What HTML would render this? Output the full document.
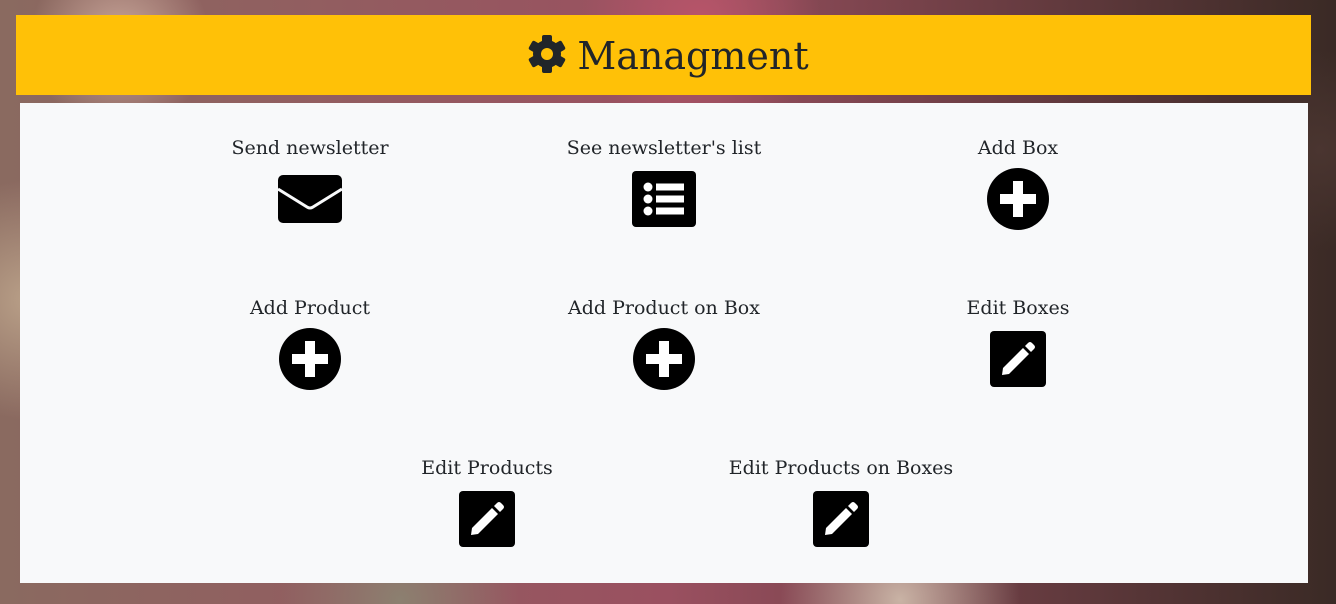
<!DOCTYPE html>
<html><head><meta charset="utf-8"><style>
*{margin:0;padding:0;box-sizing:border-box}
body{width:1336px;height:604px;overflow:hidden;position:relative;font-family:"DejaVu Serif","Liberation Serif",serif;color:#212529;
background:
radial-gradient(circle at 120px 40px,#c9a79a 0,transparent 90px),
radial-gradient(circle at 700px 20px,#b8556a 0,transparent 120px),
radial-gradient(circle at 30px 300px,#b9a088 0,transparent 120px),
radial-gradient(circle at 1320px 150px,#4a3530 0,transparent 100px),
radial-gradient(circle at 400px 600px,#8c8070 0,transparent 120px),
radial-gradient(circle at 900px 600px,#c9b3a5 0,transparent 120px),
linear-gradient(90deg,#8a6a60,#9a5060 50%,#3a2a25);}
.bar{position:absolute;left:16px;top:15px;width:1295px;height:80px;background:#ffc107}
.title{position:absolute;left:0;right:0;top:33px;text-align:center;font-size:38px;line-height:46px;}
.title svg{vertical-align:-5px;margin-right:10px}
.panel{position:absolute;left:20px;top:103px;width:1288px;height:480px;background:#f8f9fa}
.lbl{position:absolute;width:300px;text-align:center;font-size:19px;line-height:20px;white-space:nowrap}
.ic{position:absolute}
</style></head><body>
<div class="bar"></div>
<div class="title"><svg width="40" height="40" viewBox="0 0 40 40"><g fill="#212529" transform="translate(20 20)">
<circle r="14"/>
<g id="t"><rect x="-5" y="-19" width="10" height="10" rx="2"/></g>
<use href="#t" transform="rotate(60)"/><use href="#t" transform="rotate(120)"/><use href="#t" transform="rotate(180)"/><use href="#t" transform="rotate(240)"/><use href="#t" transform="rotate(300)"/>
<circle r="6" fill="#ffc107"/></g></svg>Managment</div>
<div class="panel"></div>

<div class="lbl" style="left:160px;top:138px">Send newsletter</div>
<div class="lbl" style="left:514px;top:138px">See newsletter's list</div>
<div class="lbl" style="left:868px;top:138px">Add Box</div>
<div class="lbl" style="left:160px;top:298px">Add Product</div>
<div class="lbl" style="left:514px;top:298px">Add Product on Box</div>
<div class="lbl" style="left:868px;top:298px">Edit Boxes</div>
<div class="lbl" style="left:337px;top:458px">Edit Products</div>
<div class="lbl" style="left:691px;top:458px">Edit Products on Boxes</div>

<svg class="ic" style="left:278px;top:175px" width="64" height="48" viewBox="0 0 64 48"><rect width="64" height="48" rx="5"/><path d="M0 14 L29 32 Q32 34 35 32 L64 14" fill="none" stroke="#f8f9fa" stroke-width="3"/></svg>

<svg class="ic" style="left:632px;top:171px" width="64" height="56" viewBox="0 0 64 56"><rect width="64" height="56" rx="4"/><g fill="#fff"><circle cx="16" cy="16" r="4.5"/><circle cx="16" cy="28" r="4.5"/><circle cx="16" cy="40" r="4.5"/><rect x="24" y="12.5" width="28" height="7"/><rect x="24" y="24.5" width="28" height="7"/><rect x="24" y="36.5" width="28" height="7"/></g></svg>

<svg class="ic" style="left:987px;top:168px" width="62" height="62" viewBox="0 0 62 62"><circle cx="31" cy="31" r="31"/><rect x="26" y="13" width="10" height="36" fill="#fff"/><rect x="13" y="26" width="36" height="10" fill="#fff"/></svg>
<svg class="ic" style="left:279px;top:328px" width="62" height="62" viewBox="0 0 62 62"><circle cx="31" cy="31" r="31"/><rect x="26" y="13" width="10" height="36" fill="#fff"/><rect x="13" y="26" width="36" height="10" fill="#fff"/></svg>
<svg class="ic" style="left:633px;top:328px" width="62" height="62" viewBox="0 0 62 62"><circle cx="31" cy="31" r="31"/><rect x="26" y="13" width="10" height="36" fill="#fff"/><rect x="13" y="26" width="36" height="10" fill="#fff"/></svg>

<svg class="ic" style="left:990px;top:331px" width="56" height="56" viewBox="0 0 56 56"><rect width="56" height="56" rx="4"/><g fill="#fff"><path d="M13 37 L33 17 L39 23 L19 43 L12 44 Z"/><path d="M35 15 L38 12 Q40 10 42 12 L44 14 Q46 16 44 18 L41 21 Z"/></g></svg>
<svg class="ic" style="left:459px;top:491px" width="56" height="56" viewBox="0 0 56 56"><rect width="56" height="56" rx="4"/><g fill="#fff"><path d="M13 37 L33 17 L39 23 L19 43 L12 44 Z"/><path d="M35 15 L38 12 Q40 10 42 12 L44 14 Q46 16 44 18 L41 21 Z"/></g></svg>
<svg class="ic" style="left:813px;top:491px" width="56" height="56" viewBox="0 0 56 56"><rect width="56" height="56" rx="4"/><g fill="#fff"><path d="M13 37 L33 17 L39 23 L19 43 L12 44 Z"/><path d="M35 15 L38 12 Q40 10 42 12 L44 14 Q46 16 44 18 L41 21 Z"/></g></svg>
</body></html>
